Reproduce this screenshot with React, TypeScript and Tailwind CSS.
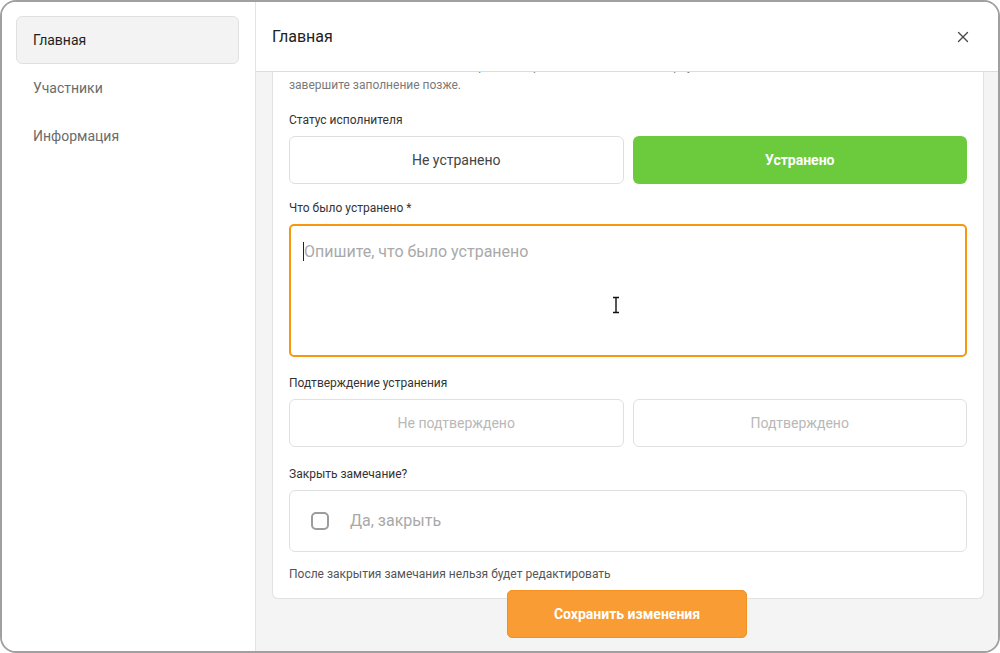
import { X } from "lucide-react";

const font = { fontFamily: "Roboto, 'Noto Sans', sans-serif" };

function SideItem({ label, active }: { label: string; active?: boolean }) {
  return (
    <div
      className={
        active
          ? "h-12 flex items-center px-4 rounded-md border border-[#e0e0e0] bg-[#f3f3f3] text-sm text-[#1f1f1f]"
          : "h-12 flex items-center px-[17px] text-sm text-[#6b6b6b]"
      }
    >
      {label}
    </div>
  );
}

function Label({ children }: { children: React.ReactNode }) {
  return <p className="text-xs leading-4 text-[#333] mb-2">{children}</p>;
}

export default function App() {
  return (
    <div className="w-[1000px] h-[653px] bg-white" style={font}>
      <div className="w-full h-full border-2 border-[#a19f9f] rounded-[16px] overflow-hidden flex">
        {/* Sidebar */}
        <aside className="w-[254px] shrink-0 border-r border-[#e3e3e3] bg-white pl-[14px] pr-4 pt-[14px]">
          <SideItem label="Главная" active />
          <SideItem label="Участники" />
          <SideItem label="Информация" />
        </aside>

        {/* Main */}
        <div className="flex-1 flex flex-col min-w-0">
          <header className="h-[70px] shrink-0 flex items-center justify-between pl-4 pr-[26px] border-b border-[#dcdcdc] bg-white">
            <h1 className="text-base text-[#222]">Главная</h1>
            <X size={18} strokeWidth={1.8} className="text-[#4a4a4a]" />
          </header>

          <div className="relative flex-1 bg-[#f4f4f4] overflow-hidden pl-4 pr-[14px]">
            <div className="-mt-[31px] bg-white border border-t-0 border-[#e2e2e2] rounded-b-[6px] px-4 pt-4 pb-4">
              <p className="text-xs leading-[19px] text-[#7a7a7a] mb-[17px]">
                Если сейчас нет всех данных, сохраните черновик — вы сможете вернуться к замечанию, дополнить его и
                <br />
                завершите заполнение позже.
              </p>

              <Label>Статус исполнителя</Label>
              <div className="grid grid-cols-2 gap-[9px] mb-4">
                <button className="h-12 rounded-md border border-[#dedede] bg-white text-sm text-[#444]">
                  Не устранено
                </button>
                <button className="h-12 rounded-md bg-[#6cca3d] text-sm font-bold text-white">Устранено</button>
              </div>

              <Label>Что было устранено *</Label>
              <div className="relative mb-[18px]">
                <textarea
                  className="block w-full h-[133px] resize-none rounded-[5px] border-2 border-[#f5980f] px-[13px] py-[14px] text-base leading-6 text-[#333] placeholder-[#a9a9a9] outline-none"
                  placeholder="Опишите, что было устранено"
                />
                <span className="absolute left-[14px] top-[18px] w-px h-[19px] bg-[#222]" />
                <svg
                  className="absolute left-[322px] top-[72px]"
                  width="10"
                  height="18"
                  viewBox="0 0 10 18"
                >
                  <path d="M2 1.5h6M5 1.5v15M2 16.5h6" stroke="#111" strokeWidth="1.4" fill="none" />
                </svg>
              </div>

              <Label>Подтверждение устранения</Label>
              <div className="grid grid-cols-2 gap-[9px] mb-[19px]">
                <button className="h-12 rounded-md border border-[#e0e0e0] bg-white text-sm text-[#b8b8b8]">
                  Не подтверждено
                </button>
                <button className="h-12 rounded-md border border-[#e0e0e0] bg-white text-sm text-[#b8b8b8]">
                  Подтверждено
                </button>
              </div>

              <Label>Закрыть замечание?</Label>
              <label className="h-[62px] flex items-center gap-[21px] pl-[21px] rounded-md border border-[#e0e0e0] mb-[14px]">
                <span className="w-[18px] h-[18px] rounded-[5px] border-2 border-[#9c9c9c]" />
                <span className="text-base text-[#a9a9a9]">Да, закрыть</span>
              </label>

              <p className="text-xs leading-4 text-[#555]">После закрытия замечания нельзя будет редактировать</p>
            </div>

            <button className="absolute left-1/2 -translate-x-1/2 bottom-[13px] w-[240px] h-12 rounded-[5px] border border-[#f2911f] bg-[#f99c33] text-sm font-bold text-white">
              Сохранить изменения
            </button>
          </div>
        </div>
      </div>
    </div>
  );
}
